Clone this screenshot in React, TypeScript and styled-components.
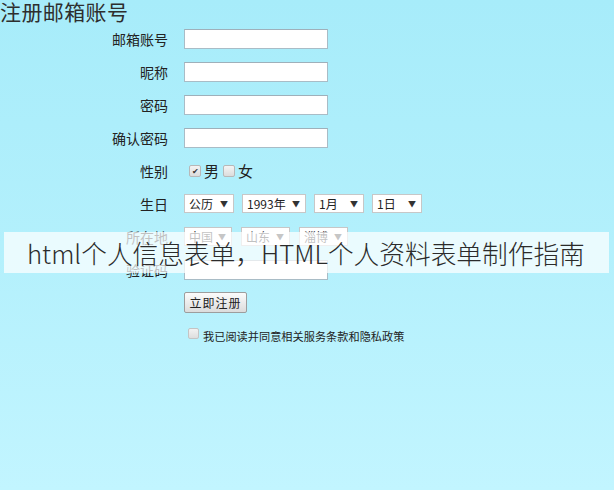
import styled, { createGlobalStyle } from "styled-components";

const GlobalStyle = createGlobalStyle`
  html, body {
    margin: 0;
    padding: 0;
  }
  body {
    width: 614px;
    height: 490px;
    overflow: hidden;
    background: linear-gradient(180deg, #a7ecfa 0%, #b3f0fc 50%, #c2f5ff 100%);
    font-family: "Noto Sans CJK SC", "Noto Sans", sans-serif;
    color: #222;
  }
`;

const birthSelects = [
  { text: "公历", width: 50 },
  { text: "1993年", width: 64 },
  { text: "1月", width: 50 },
  { text: "1日", width: 50 },
];

const placeSelects = [
  { text: "中国", width: 48 },
  { text: "山东", width: 49 },
  { text: "淄博", width: 49 },
];

export default function App() {
  return (
    <Page>
      <GlobalStyle />
      <Title>注册邮箱账号</Title>
      <Form>
        <Label>邮箱账号</Label>
        <Field>
          <TextBox />
        </Field>
        <Label>昵称</Label>
        <Field>
          <TextBox />
        </Field>
        <Label>密码</Label>
        <Field>
          <TextBox />
        </Field>
        <Label>确认密码</Label>
        <Field>
          <TextBox />
        </Field>
        <Label>性别</Label>
        <Field>
          <RadioGroup>
            <CheckMark $checked>✔</CheckMark>
            <Choice>男</Choice>
            <CheckMark />
            <Choice>女</Choice>
          </RadioGroup>
        </Field>
        <Label>生日</Label>
        <Field $gap={8}>
          {birthSelects.map((s) => (
            <SelectBox key={s.text} $width={s.width}>
              <span>{s.text}</span>
              <Arrow>▼</Arrow>
            </SelectBox>
          ))}
        </Field>
        <Label>所在地</Label>
        <Field $gap={9}>
          {placeSelects.map((s) => (
            <SelectBox key={s.text} $width={s.width}>
              <span>{s.text}</span>
              <Arrow>▼</Arrow>
            </SelectBox>
          ))}
        </Field>
        <Label>验证码</Label>
        <Field>
          <TextBox />
        </Field>
        <span />
        <ButtonCell>
          <SubmitButton>立即注册</SubmitButton>
        </ButtonCell>
        <span />
        <Agreement>
          <SmallCheck />
          <AgreeText>我已阅读并同意相关服务条款和隐私政策</AgreeText>
        </Agreement>
      </Form>
      <Banner>html个人信息表单，HTML个人资料表单制作指南</Banner>
    </Page>
  );
}

const Page = styled.div`
  position: relative;
  width: 614px;
  height: 490px;
`;

const Title = styled.h1`
  margin: 0;
  font-size: 21px;
  line-height: 22px;
  font-weight: 400;
  color: #2e2e2e;
  letter-spacing: 0.4px;
`;

const Form = styled.div`
  display: grid;
  grid-template-columns: 168px 1fr;
  grid-auto-rows: 33px;
  column-gap: 16px;
`;

const Label = styled.div`
  display: flex;
  align-items: center;
  justify-content: flex-end;
  font-size: 14px;
  color: #222;
`;

const Field = styled.div<{ $gap?: number }>`
  display: flex;
  align-items: center;
  gap: ${(p) => p.$gap ?? 0}px;
`;

const TextBox = styled.div`
  width: 142px;
  height: 18px;
  background: #ffffff;
  border: 1px solid #a9bcc6;
  border-top-color: #9fb0ba;
`;

const RadioGroup = styled.div`
  display: flex;
  align-items: center;
  padding-left: 5px;
`;

const CheckMark = styled.span<{ $checked?: boolean }>`
  display: inline-flex;
  align-items: center;
  justify-content: center;
  width: 10px;
  height: 10px;
  border: 1px solid #b8b8b8;
  border-radius: 2px;
  background: linear-gradient(180deg, #f4f4f4, #dcdcdc);
  font-size: 8px;
  line-height: 1;
  color: #333;
  margin-right: 3px;
`;

const Choice = styled.span`
  font-size: 15px;
  color: #222;
  margin-right: 4px;
`;

const SelectBox = styled.div<{ $width: number }>`
  box-sizing: border-box;
  width: ${(p) => p.$width}px;
  height: 19px;
  display: flex;
  align-items: center;
  justify-content: space-between;
  padding: 0 5px 0 4px;
  background: #ffffff;
  border: 1px solid #c7c7c7;
  font-size: 12px;
  color: #222;
`;

const Arrow = styled.span`
  font-size: 8px;
  color: #333;
`;

const ButtonCell = styled.div`
  display: flex;
  align-items: center;
`;

const SubmitButton = styled.button`
  width: 63px;
  height: 21px;
  padding: 0;
  border: 1px solid #9d9d9d;
  border-radius: 2px;
  background: linear-gradient(180deg, #fbfbfb 0%, #ececec 50%, #dcdcdc 100%);
  font-family: "Noto Sans CJK SC", sans-serif;
  font-size: 12px;
  letter-spacing: 1px;
  color: #222;
`;

const Agreement = styled.div`
  display: flex;
  align-items: center;
  padding-left: 4px;
`;

const SmallCheck = styled.span`
  width: 9px;
  height: 9px;
  border: 1px solid #c4c4c4;
  border-radius: 2px;
  background: linear-gradient(180deg, #f2f2f2, #dedede);
  margin-right: 4px;
  margin-top: -5px;
`;

const AgreeText = styled.span`
  font-size: 11.2px;
  color: #222;
  white-space: nowrap;
`;

const Banner = styled.div`
  position: absolute;
  left: 4px;
  right: 5px;
  top: 232px;
  height: 41px;
  display: flex;
  align-items: center;
  padding-left: 23px;
  background: rgba(255, 255, 255, 0.72);
  font-size: 25.7px;
  font-weight: 300;
  color: #2b2b2b;
  white-space: nowrap;
`;
